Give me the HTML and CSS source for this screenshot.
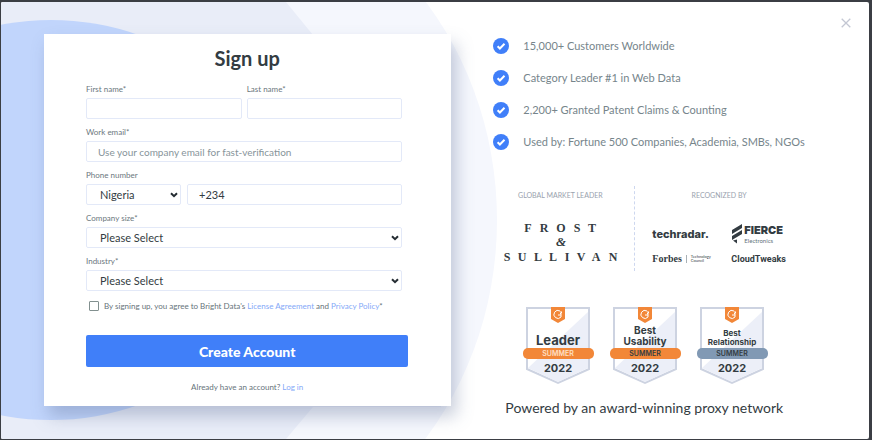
FILE: index.html
```html
<!DOCTYPE html>
<html lang="en">
<head>
<meta charset="utf-8">
<title>Sign up</title>
<link rel="stylesheet" href="styles.css">
</head>
<body>
<main class="modal">
  <svg class="backdrop" viewBox="0 0 868 437" preserveAspectRatio="xMinYMid slice" aria-hidden="true">
    <ellipse cx="190" cy="218" rx="306" ry="340" fill="#f5f7fd"/>
    <path d="M0 0H285L312 33H440V405H312L285 437H0z" fill="#e9edf8"/>
    <ellipse cx="50" cy="218" rx="230" ry="200" fill="#c1d5fc"/>
  </svg>
  <button class="close" type="button" aria-label="Close">
    <svg viewBox="0 0 10 10" width="10" height="10"><path d="M.7.7l8.600 8.600M9.300.7L.7 9.300" stroke="#c3c7d3" stroke-width="1.300" fill="none"/></svg>
  </button>

  <section class="form-side">
    <form class="card">
      <h1>Sign up</h1>
      <div class="fields">
        <div class="pair">
          <div class="field"><label for="first">First name*</label><input id="first" type="text"></div>
          <div class="field"><label for="last">Last name*</label><input id="last" type="text"></div>
        </div>
        <div class="field"><label for="email">Work email*</label><input id="email" type="email" placeholder="Use your company email for fast-verification"></div>
        <div class="field">
          <label for="phone">Phone number</label>
          <div class="phone">
            <div class="select"><select aria-label="Country"><option>Nigeria</option></select><svg viewBox="0 0 8 6"><path d="M1 1.200l3 3 3-3"/></svg></div>
            <input id="phone" type="tel" value="+234">
          </div>
        </div>
        <div class="field"><label for="size">Company size*</label>
          <div class="select"><select id="size"><option>Please Select</option></select><svg viewBox="0 0 8 6"><path d="M1 1.200l3 3 3-3"/></svg></div>
        </div>
        <div class="field"><label for="industry">Industry*</label>
          <div class="select"><select id="industry"><option>Please Select</option></select><svg viewBox="0 0 8 6"><path d="M1 1.200l3 3 3-3"/></svg></div>
        </div>
      </div>
      <div class="agree">
        <input id="agree" type="checkbox">
        <label for="agree">By signing up, you agree to Bright Data's <a href="#">License Agreement</a> and <a href="#">Privacy Policy</a>*</label>
      </div>
      <button class="submit" type="submit">Create Account</button>
      <p class="login">Already have an account? <a href="#">Log in</a></p>
    </form>
  </section>

  <section class="info">
    <ul class="benefits">
      <li><svg viewBox="0 0 16 16"><circle cx="8" cy="8" r="8"/><path d="M4.600 8.200l2.300 2.300 4.600-4.700"/></svg>15,000+ Customers Worldwide</li>
      <li><svg viewBox="0 0 16 16"><circle cx="8" cy="8" r="8"/><path d="M4.600 8.200l2.300 2.300 4.600-4.700"/></svg>Category Leader #1 in Web Data</li>
      <li><svg viewBox="0 0 16 16"><circle cx="8" cy="8" r="8"/><path d="M4.600 8.200l2.300 2.300 4.600-4.700"/></svg>2,200+ Granted Patent Claims &amp; Counting</li>
      <li><svg viewBox="0 0 16 16"><circle cx="8" cy="8" r="8"/><path d="M4.600 8.200l2.300 2.300 4.600-4.700"/></svg>Used by: Fortune 500 Companies, Academia, SMBs, NGOs</li>
    </ul>

    <div class="recognition">
      <div class="leader">
        <h2>GLOBAL MARKET LEADER</h2>
        <svg class="frost" viewBox="0 0 120 46" width="120" height="46" role="img" aria-label="Frost &amp; Sullivan">
          <g font-family="Liberation Serif, serif" font-size="12" font-weight="700" fill="#333c42" text-anchor="middle">
            <text x="26 42 59 75 90" y="14">FROST</text>
            <text x="59" y="28" font-size="13" font-style="italic">&amp;</text>
            <text x="5 20 36 51 65 79 94 111" y="43">SULLIVAN</text>
          </g>
        </svg>
      </div>
      <div class="press">
        <h2>RECOGNIZED BY</h2>
        <div class="logos">
          <span class="techradar">techradar.</span>
          <div class="fierce">
            <svg viewBox="0 0 12 20" width="12" height="20"><path d="M1 6L11 0v4L1 10zM1 12l10-6v4L1 16zM2 16.500l4-1v4z" fill="#333c42"/></svg>
            <div><b>FIERCE</b><small>Electronics</small></div>
          </div>
          <div class="forbes"><b>Forbes</b><small>Technology<br>Council</small></div>
          <span class="tweaks">CloudTweaks</span>
        </div>
      </div>
    </div>

    <div class="badges">
      <svg viewBox="0 0 72 78" role="img" aria-label="Leader, Summer 2022">
        <path class="shield" d="M5 1h62v61L36 76 5 62z"/><path class="shade" d="M66 5v56L36 75 6 61z"/>
        <path class="tag" d="M29 0h14v12l-7 4-7-4z"/><path class="g" d="M38 4a4 4 0 1 0 1 6V8h-3M38 5h2l-2 2h2"/>
        <text class="name big" x="36" y="38">Leader</text>
        <rect class="band" y="41" x="1" width="71" height="11" rx="5"/><text class="season pale" x="36" y="49">SUMMER</text>
        <text class="year" x="36" y="65">2022</text>
      </svg>
      <svg viewBox="0 0 72 78" role="img" aria-label="Best Usability, Summer 2022">
        <path class="shield" d="M5 1h62v61L36 76 5 62z"/><path class="shade" d="M66 5v56L36 75 6 61z"/>
        <path class="tag" d="M29 0h14v12l-7 4-7-4z"/><path class="g" d="M38 4a4 4 0 1 0 1 6V8h-3M38 5h2l-2 2h2"/>
        <text class="name mid" x="36" y="27">Best</text><text class="name mid" x="36" y="38">Usability</text>
        <rect class="band" y="41" x="1" width="71" height="11" rx="5"/><text class="season" x="36" y="49">SUMMER</text>
        <text class="year" x="36" y="65">2022</text>
      </svg>
      <svg viewBox="0 0 72 78" role="img" aria-label="Best Relationship, Summer 2022">
        <path class="shield" d="M5 1h62v61L36 76 5 62z"/><path class="shade" d="M66 5v56L36 75 6 61z"/>
        <path class="tag" d="M29 0h14v12l-7 4-7-4z"/><path class="g" d="M38 4a4 4 0 1 0 1 6V8h-3M38 5h2l-2 2h2"/>
        <text class="name small" x="36" y="29">Best</text><text class="name small" x="36" y="38">Relationship</text>
        <rect class="band blue" y="41" x="1" width="71" height="11" rx="5"/><text class="season" x="36" y="49">SUMMER</text>
        <text class="year" x="36" y="65">2022</text>
      </svg>
    </div>
    <p class="powered">Powered by an award-winning proxy network</p>
  </section>
</main>
</body>
</html>
```
FILE: styles.css
```css
* { box-sizing: border-box; }
body {
  margin: 0;
  min-height: 100vh;
  display: flex;
  padding: 2px 3px 1px 1px;
  background: #3b3e44;
  font-family: Lato, sans-serif;
  color: #333c42;
}
h1, h2, p, ul { margin: 0; padding: 0; }
a { color: #84a9f8; text-decoration: none; }
input, select, button { font-family: inherit; color: inherit; margin: 0; }

.modal {
  position: relative;
  flex: 1;
  display: grid;
  grid-template-columns: minmax(0, 52fr) minmax(0, 48fr);
  background: #fff;
  border-radius: 2px;
  overflow: hidden;
}
.backdrop { position: absolute; inset: 0; width: 100%; height: 100%; }
.close {
  position: absolute;
  top: 16px;
  right: 18px;
  padding: 0;
  border: 0;
  background: none;
  line-height: 0;
  z-index: 1;
}

.form-side { position: relative; padding: 32px 1px 32px 43px; }
.card {
  padding: 12px 43px 13px 42px;
  background: #fff;
  box-shadow: 5px 10px 16px rgba(90, 105, 145, .35);
}
h1 { font-size: 20px; line-height: 24px; text-align: center; }
.fields { display: grid; gap: 7px; margin: 13px 6px 0 0; }
.pair { display: grid; grid-template-columns: 1fr 1fr; gap: 5px; }
.field { display: grid; gap: 3px; }
.field label { font-size: 8px; line-height: 12px; color: #6b777d; }
.field input, .select select {
  width: 100%;
  min-width: 0;
  height: 21px;
  border: 1px solid #e3e9f8;
  border-radius: 2px;
  background: #fff;
  padding: 0 11px;
  font-size: 11px;
  outline: 0;
}
.field input::placeholder { color: #87949a; font-size: 10px; opacity: 1; }
.phone { display: grid; grid-template-columns: 95fr 215fr; gap: 6px; }
.select { position: relative; display: grid; }
.select select { appearance: none; padding-left: 13px; }
.select svg {
  position: absolute;
  right: 3px;
  top: 8px;
  width: 8px;
  height: 6px;
  fill: none;
  stroke: #252d33;
  stroke-width: 2;
  pointer-events: none;
}
.agree { display: flex; align-items: center; gap: 5px; margin-top: 9px; padding-left: 3px; }
.agree input {
  appearance: none;
  width: 10px;
  height: 10px;
  border: 1px solid #82908f;
  border-radius: 1px;
}
.agree label { font-size: 8px; line-height: 12px; color: #66737a; white-space: nowrap; }
.submit {
  display: block;
  width: 100%;
  height: 32px;
  margin-top: 23px;
  border: 0;
  border-radius: 2px;
  background: #407ff9;
  color: #fff;
  font-size: 14px;
  font-weight: 900;
}
.login { margin-top: 14px; font-size: 8px; line-height: 12px; text-align: center; color: #66737a; }

.info { position: relative; padding: 36px 49px 16px 41px; }
.benefits { list-style: none; display: grid; gap: 16px; }
.benefits li {
  display: flex;
  align-items: center;
  gap: 14px;
  font-size: 11px;
  line-height: 16px;
  color: #76858b;
  white-space: nowrap;
}
.benefits svg { width: 16px; height: 16px; fill: #407ff9; }
.benefits path { fill: none; stroke: #fff; stroke-width: 2; }

.recognition { display: grid; grid-template-columns: 142px 1fr; margin-top: 36px; }
.recognition h2 { font-size: 7px; line-height: 10px; font-weight: 400; text-align: center; color: #99a2ae; }
.leader { padding: 4px 7px 0 0; border-right: 1px dashed #cdd7ef; }
.frost { display: block; margin: 18px 0 0 9px; }
.press { padding: 4px 62px 5px 17px; white-space: nowrap; }
.logos {
  display: grid;
  grid-template-columns: 79px auto;
  justify-content: start;
  align-items: center;
  row-gap: 7px;
  margin-top: 23px;
}
.techradar { font: 800 11px/16px Inter, sans-serif; }
.fierce { display: flex; align-items: center; gap: 1px; }
.fierce b { display: block; font: 900 11px/14px Inter, sans-serif; }
.fierce small { display: block; font-size: 6px; line-height: 8px; color: #65737a; }
.forbes { display: flex; align-items: center; gap: 4px; }
.forbes b { font: 700 10px/12px "Liberation Serif", serif; }
.forbes small { padding-left: 4px; border-left: 1px solid #a8b0b5; font-size: 4px; line-height: 4px; }
.tweaks { font: 700 9px/14px Roboto, sans-serif; }

.badges { display: flex; gap: 15px; margin: 36px 0 0 29px; }
.badges svg { flex: none; width: 72px; height: 78px; }
.badges text { font-family: Inter, sans-serif; font-weight: 700; text-anchor: middle; fill: #333c42; }
.shield { fill: #fff; stroke: #cdd3e1; stroke-width: 2; }
.shade { fill: #eceff8; }
.tag, .band { fill: #f28738; }
.band.blue { fill: #8199b4; }
.g { fill: none; stroke: #fff; stroke-width: 1; }
.badges .big { font-size: 13px; }
.badges .mid { font-size: 10px; }
.badges .small { font-size: 8px; }
.badges .season { font-size: 7px; font-weight: 600; }
.badges .season.pale { fill: #ffe0c5; }
.badges .year { font-size: 11px; }
.powered { margin: 14px 0 0 12px; font-size: 14px; line-height: 18px; white-space: nowrap; }
```
